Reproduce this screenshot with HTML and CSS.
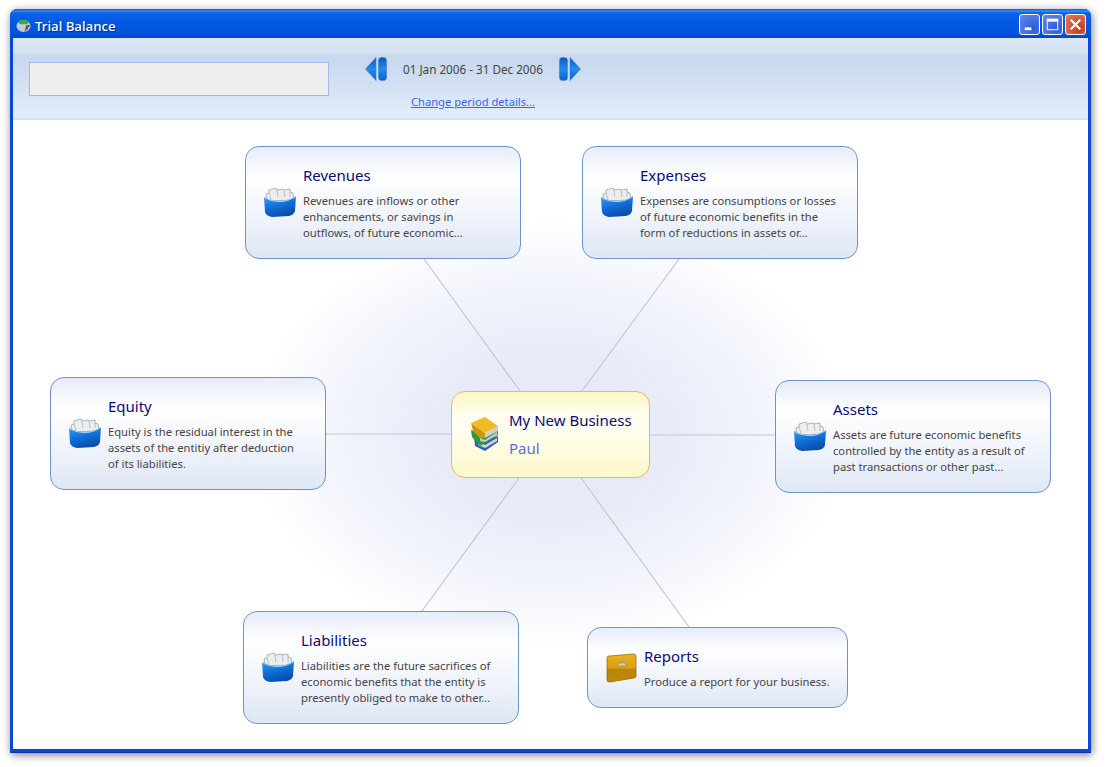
FILE: index.html
```html
<!DOCTYPE html>
<html lang="en">
<head>
<meta charset="utf-8">
<title>Trial Balance</title>
<link rel="stylesheet" href="styles.css">
</head>
<body>
<svg class="defs" width="0" height="0" aria-hidden="true">
  <defs>
    <linearGradient id="trayBlue" x1="0" y1="0" x2="0.4" y2="1">
      <stop offset="0" stop-color="#3f9df0"/><stop offset=".55" stop-color="#0f6fd8"/><stop offset="1" stop-color="#0a4fae"/>
    </linearGradient>
    <linearGradient id="navBlue" x1="0" y1="0" x2="0" y2="1">
      <stop offset="0" stop-color="#0a55c8"/><stop offset=".5" stop-color="#1f8fec"/><stop offset="1" stop-color="#0d5fd0"/>
    </linearGradient>
    <linearGradient id="caseGold" x1="0" y1="0" x2="0" y2="1">
      <stop offset="0" stop-color="#e8b420"/><stop offset=".5" stop-color="#d9a010"/><stop offset=".55" stop-color="#b98408"/><stop offset="1" stop-color="#c08a08"/>
    </linearGradient>
    <symbol id="tray" viewBox="0 0 34 32">
      <path d="M4 15 L3 8 L6 7 L6 4 L13 2 L14 4 L20 3 L21 4 L27 3 L27 6 L30 7 L31 14 Z" fill="#eceded" stroke="#9ea3ac" stroke-width=".8" stroke-linejoin="miter"/>
      <path d="M6 7 L8 13 M14 4 L15 11 M21 4 L22 11 M27 6 L27 11" stroke="#aeb2ba" stroke-width=".8" fill="none"/>
      <path d="M1 11 Q9 15 17 15 Q26 15 33 10 L32 25 Q31 29 26 30 L9 31 Q3 30 2 26 Z" fill="url(#trayBlue)"/>
      <path d="M1 11 Q9 15 17 15 Q26 15 33 10 L33 11 Q25 16 17 16 Q9 16 1 12 Z" fill="#a6d6f8"/>
    </symbol>
    <symbol id="books" viewBox="0 0 30 36">
      <path d="M3 19 L14 23 L27 19 L27 25 L14 34 L4 29 Z" fill="#2a62b8"/>
      <path d="M7 25 L14 28 L26 21 L26 24 L14 31 L7 28 Z" fill="#d5d5d0"/>
      <path d="M0 13 L14 18 L27 12 L27 18 L14 26 L9 29 L1 20 Z" fill="#2f9a3a"/>
      <path d="M9 21 L14 23 L26 15 L26 18 L14 25 L9 24 Z" fill="#c9ccc6"/>
      <path d="M14 16 L27 9 L27 14 L14 21 Z" fill="#cfd0ca"/>
      <path d="M0 6 L14 16 L14 21 L9 21 L2 14 Z" fill="#cf960c"/>
      <path d="M0 6 L14 0 L27 9 L14 16 Z" fill="#f0bc26"/>
    </symbol>
    <symbol id="briefcase" viewBox="0 0 31 30">
      <path d="M1 5 Q1 3 3 3 L27 1 Q30 1 30 3 L30 23 Q30 25 28 25 L4 29 Q1 29 1 27 Z" fill="url(#caseGold)" stroke="#8f6206" stroke-width=".7"/>
      <rect x="12" y="10" width="8" height="3" rx="1.500" transform="rotate(-6 16 11)" fill="#cfcfcf" stroke="#777" stroke-width=".5"/>
    </symbol>
  </defs>
</svg>

<div class="window">
  <header class="titlebar">
    <svg class="app-icon" viewBox="0 0 16 14" aria-hidden="true">
      <ellipse cx="8" cy="7" rx="7.500" ry="6.500" fill="#c4c9da"/>
      <path d="M2 3 Q8 -2 14 3 Q12 6 8 5 Q4 6 2 3 Z" fill="#35b035"/>
      <path d="M9 13 Q13 11 15 6 L11 6 Z" fill="#5a6078"/>
    </svg>
    <span class="title">Trial Balance</span>
    <div class="controls">
      <span class="ctl">
        <svg viewBox="0 0 20 20" aria-hidden="true"><rect x="5" y="13" width="7" height="3" fill="#fff"/></svg>
      </span>
      <span class="ctl">
        <svg viewBox="0 0 20 20" aria-hidden="true"><rect x="4.500" y="4.500" width="11" height="11" fill="none" stroke="#fff"/><rect x="4" y="4" width="12" height="3" fill="#fff"/></svg>
      </span>
      <span class="ctl ctl-close">
        <svg viewBox="0 0 20 20" aria-hidden="true"><path d="M5 5 L15 15 M15 5 L5 15" stroke="#fff" stroke-width="2.400"/></svg>
      </span>
    </div>
  </header>

  <div class="client">
    <section class="toolbar">
      <div class="search"></div>
      <div class="period">
        <div class="period-row">
          <svg class="nav" viewBox="0 0 22 24" aria-hidden="true">
            <path d="M11 .5 L.5 12 L11 23.500 Z" fill="url(#navBlue)" stroke="#3d7fd0" stroke-width=".6" stroke-linejoin="round"/>
            <rect x="13.500" y=".5" width="8" height="23" rx="3" fill="url(#navBlue)" stroke="#3d7fd0" stroke-width=".6"/>
          </svg>
          <span class="dates">01 Jan 2006 - 31 Dec 2006</span>
          <svg class="nav" viewBox="0 0 22 24" aria-hidden="true">
            <rect x=".5" y=".5" width="8" height="23" rx="3" fill="url(#navBlue)" stroke="#3d7fd0" stroke-width=".6"/>
            <path d="M11 .5 L21.500 12 L11 23.500 Z" fill="url(#navBlue)" stroke="#3d7fd0" stroke-width=".6" stroke-linejoin="round"/>
          </svg>
        </div>
        <a class="change" href="#">Change period details...</a>
      </div>
    </section>

    <main class="canvas">
      <svg class="links" width="1075" height="629" viewBox="0 0 1075 629" aria-hidden="true">
        <path d="M411 139 L507 271 M666 139 L569 271 M313 314 L438 314 M637 315 L762 315 M506 358 L409 491 M568 358 L676 507"/>
      </svg>

      <article class="node n-revenues">
        <svg class="icon icon-tray"><use href="#tray"/></svg>
        <div class="body">
          <h2>Revenues</h2>
          <p>Revenues are inflows or other enhancements, or savings in outflows, of future economic...</p>
        </div>
      </article>

      <article class="node n-expenses">
        <svg class="icon icon-tray"><use href="#tray"/></svg>
        <div class="body">
          <h2>Expenses</h2>
          <p>Expenses are consumptions or losses of future economic benefits in the form of reductions in assets or...</p>
        </div>
      </article>

      <article class="node n-equity">
        <svg class="icon icon-tray"><use href="#tray"/></svg>
        <div class="body">
          <h2>Equity</h2>
          <p>Equity is the residual interest in the assets of the entitiy after deduction of its liabilities.</p>
        </div>
      </article>

      <article class="node n-assets">
        <svg class="icon icon-tray"><use href="#tray"/></svg>
        <div class="body">
          <h2>Assets</h2>
          <p>Assets are future economic benefits controlled by the entity as a result of past transactions or other past...</p>
        </div>
      </article>

      <article class="node n-liabilities">
        <svg class="icon icon-tray"><use href="#tray"/></svg>
        <div class="body">
          <h2>Liabilities</h2>
          <p>Liabilities are the future sacrifices of economic benefits that the entity is presently obliged to make to other...</p>
        </div>
      </article>

      <article class="node n-reports">
        <svg class="icon icon-case"><use href="#briefcase"/></svg>
        <div class="body">
          <h2>Reports</h2>
          <p>Produce a report for your business.</p>
        </div>
      </article>

      <article class="node n-centre">
        <svg class="icon icon-books"><use href="#books"/></svg>
        <div class="body">
          <h2>My New Business</h2>
          <p class="owner">Paul</p>
        </div>
      </article>
    </main>
  </div>
</div>
</body>
</html>
```

FILE: styles.css
```css
* { box-sizing: border-box; }

html, body {
  margin: 0;
  height: 100%;
  background: #fff;
  overflow: hidden;
}

body {
  padding: 9px 15px 14px 10px;
  font-family: "Noto Sans", "Open Sans", sans-serif;
}

.defs { position: absolute; }

.window {
  height: 744px;
  display: flex;
  flex-direction: column;
  background: #0a46d8;
  border-radius: 7px 7px 0 0;
  box-shadow: 1px 2px 9px rgba(0, 0, 0, .5);
  border-bottom: 1px solid #0b2fa8;
}

.titlebar {
  height: 29px;
  flex: none;
  display: flex;
  align-items: center;
  padding: 5px 3px 0 6px;
  border-radius: 7px 7px 0 0;
  background: linear-gradient(#0a5ae6 0, #3a8af5 2px, #0c62ec 4px, #0058e4 14px, #0053dd 24px, #0148c8 29px);
}

.app-icon { width: 15px; height: 14px; flex: none; }

.title {
  margin-left: 4px;
  color: #fff;
  font-size: 13.300px;
  font-weight: 500;
  text-shadow: 1px 1px 1px #0a2a8a;
}

.controls {
  margin: -4px 0 0 auto;
  display: flex;
  gap: 2px;
  padding-right: 2px;
}

.ctl {
  width: 21px;
  height: 21px;
  border: 1px solid #fff;
  border-radius: 3px;
  background: radial-gradient(circle at 70% 70%, #2c5ad8, #5f86ea 90%);
}

.ctl svg { display: block; width: 100%; height: 100%; }

.ctl-close { background: radial-gradient(circle at 70% 70%, #c8391a, #e87858 95%); }

.client {
  flex: 1;
  display: flex;
  flex-direction: column;
  min-height: 0;
  margin: 0 3px 3px 3px;
  background: #fff;
}

.toolbar {
  height: 82px;
  flex: none;
  display: flex;
  align-items: flex-start;
  padding: 24px 0 0 16px;
  border-bottom: 2px solid #d6e3f5;
  background: linear-gradient(#dde8f6 0, #d3e0f0 16px, #c7d7ec 17px, #cddcf0 35px, #e3eefb 80px);
}

.search {
  width: 300px;
  height: 34px;
  background: #eee;
  border: 1px solid #9dbcea;
}

.period {
  margin: -6px 0 0 36px;
  display: flex;
  flex-direction: column;
  align-items: center;
}

.period-row {
  display: flex;
  align-items: center;
  gap: 16px;
  height: 25px;
}

.nav { width: 22px; height: 24px; flex: none; }

.dates { font-size: 11.700px; color: #444; width: 140px; white-space: nowrap; }

.change {
  margin-top: 13px;
  font-size: 11.200px;
  line-height: 16px;
  color: #3f63e8;
  white-space: nowrap;
}

.canvas {
  position: relative;
  flex: 1;
  min-height: 0;
  overflow: hidden;
  background: radial-gradient(ellipse 300px 215px at 537px 314px, #e4eaf6 0, #e6ebf7 35%, #f1f4fb 70%, #fff 100%);
}

.links { position: absolute; left: 0; top: 0; }

.links path { stroke: #c3c8d0; stroke-width: 1.200; fill: none; }

.node {
  position: absolute;
  width: 276px;
  height: 113px;
  display: flex;
  align-items: center;
  padding-left: 17px;
  border: 1px solid #6d93cf;
  border-radius: 14px;
  background: linear-gradient(#e6edf8 0, #fff 28%, #f3f6fc 55%, #dfe7f5 100%);
}

.n-revenues { left: 232px; top: 26px; }
.n-expenses { left: 569px; top: 26px; }
.n-equity { left: 37px; top: 257px; }
.n-assets { left: 762px; top: 260px; }
.n-liabilities { left: 230px; top: 491px; }

.n-reports {
  left: 574px;
  top: 507px;
  width: 261px;
  height: 81px;
  padding-left: 18px;
}

.n-centre {
  left: 438px;
  top: 271px;
  width: 199px;
  height: 87px;
  padding-left: 19px;
  border-color: #efb26c;
  background: linear-gradient(#fdf8c6 0, #fffeee 28%, #fffef0 45%, #fbf8c8 100%);
}

.icon { flex: none; }

.icon-tray { width: 34px; height: 32px; margin: -2px 6px 0 0; }

.icon-case { width: 31px; height: 30px; margin: 0 7px 0 0; }

.icon-books { width: 30px; height: 36px; margin: 0 8px 0 0; }

.body { flex: 1; min-width: 0; padding: 0 20px 0 0; }

.body h2 {
  margin: 0 0 8px;
  font-size: 15px;
  line-height: 20px;
  font-weight: 400;
  color: #0a0a78;
}

.body p {
  margin: 0;
  font-size: 11.200px;
  line-height: 16px;
  color: #444;
}

.n-reports .body { padding-right: 10px; }

.n-centre .body { padding: 0 0 2px; }

.n-centre h2 { font-size: 15px; white-space: nowrap; }

.body .owner { font-size: 15px; line-height: 20px; color: #5a6ee6; }
```
